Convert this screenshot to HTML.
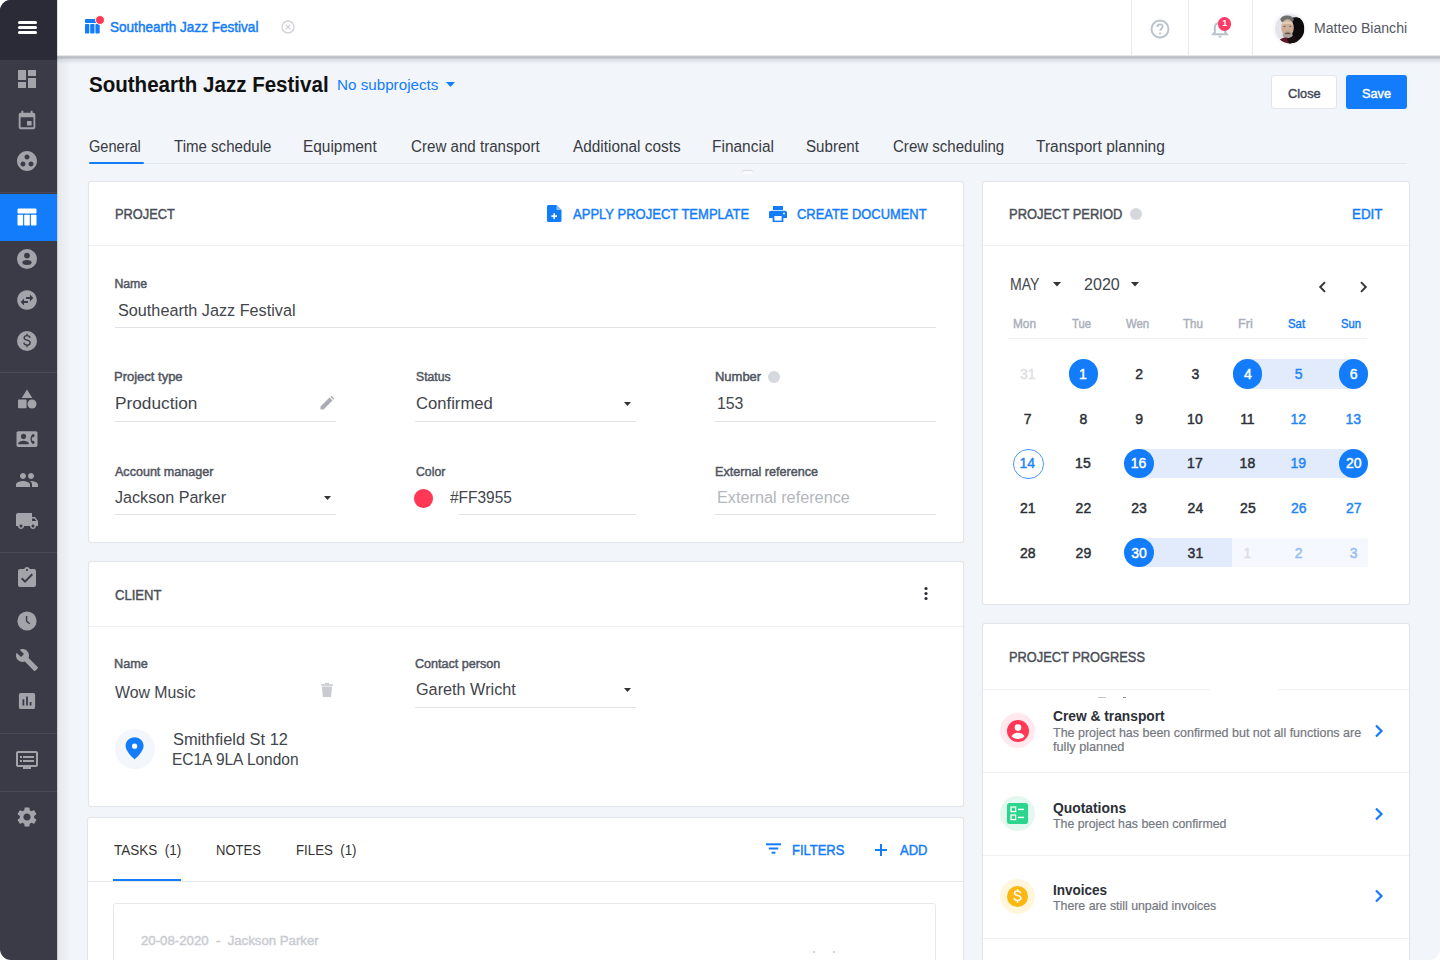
<!DOCTYPE html>
<html><head><meta charset="utf-8">
<style>
*{margin:0;padding:0;box-sizing:border-box}
html,body{width:1440px;height:960px;overflow:hidden;background:#fff}
body{font-family:"Liberation Sans",sans-serif;position:relative}
#app{position:absolute;left:0;top:0;width:1440px;height:960px;border-radius:11px;overflow:hidden;background:#f2f5fa}
.t{position:absolute;white-space:pre;line-height:1;transform-origin:0 0}
.a{position:absolute}
.card{position:absolute;background:#fff;border:1px solid #e4e5e8;border-radius:3px;box-shadow:0 0 1.5px rgba(0,0,0,0.06)}
.hl{position:absolute;height:1px;background:#eef0f3}
.ul{position:absolute;height:1px;background:#dfe2e6}
svg{position:absolute;overflow:visible}
</style></head><body>
<div id="app">
<!-- main area shadow from sidebar -->
<div class="a" style="left:57px;top:56px;width:14px;height:904px;background:linear-gradient(90deg,rgba(0,0,0,0.06),rgba(0,0,0,0))"></div>

<!-- header -->
<div class="a" style="left:57px;top:0;width:1383px;height:56px;background:#fff"></div>
<div class="a" style="left:57px;top:55px;width:1383px;height:9px;background:linear-gradient(180deg,rgba(150,156,162,0.05) 0px,rgba(140,146,152,0.45) 1.2px,rgba(140,146,152,0.55) 2.5px,rgba(160,166,176,0.3) 4.5px,rgba(200,205,215,0) 9px)"></div>
<div class="a" style="left:1131px;top:0;width:1px;height:56px;background:#e8eaed"></div>
<div class="a" style="left:1188px;top:0;width:1px;height:56px;background:#e8eaed"></div>
<div class="a" style="left:1252px;top:0;width:1px;height:56px;background:#e8eaed"></div>

<!-- logo -->
<svg style="left:85px;top:19px" width="16" height="15" viewBox="0 0 16 15">
 <rect x="0" y="0" width="13" height="4" rx="1" fill="#127cfa"/>
 <rect x="0" y="5" width="4.3" height="9.5" rx="0.8" fill="#127cfa"/>
 <rect x="5.2" y="5" width="4.3" height="9.5" rx="0.8" fill="#127cfa"/>
 <rect x="10.4" y="5" width="4.3" height="9.5" rx="0.8" fill="#127cfa"/>
</svg>
<div class="a" style="left:95px;top:15px;width:10px;height:10px;border-radius:50%;background:#ff3955;border:1px solid #fff"></div>
<!-- close circle -->
<svg style="left:281px;top:20px" width="14" height="14" viewBox="0 0 14 14">
 <circle cx="7" cy="7" r="6" fill="none" stroke="#cfd2d6" stroke-width="1.3"/>
 <path d="M4.6 4.6L9.4 9.4M9.4 4.6L4.6 9.4" stroke="#cfd2d6" stroke-width="1.3"/>
</svg>
<!-- help -->
<svg style="left:1150px;top:18.6px" width="20" height="20" viewBox="0 0 20 20">
 <circle cx="10" cy="10" r="8.5" fill="none" stroke="#bac2cc" stroke-width="1.9"/>
 <path d="M7.4 8c0-1.6 1.1-2.6 2.6-2.6s2.6 1 2.6 2.4c0 1.8-2.4 2-2.4 3.9" fill="none" stroke="#bac2cc" stroke-width="1.9"/>
 <circle cx="10.1" cy="14.5" r="1.1" fill="#bac2cc"/>
</svg>
<!-- bell -->
<svg style="left:1211px;top:19px" width="18" height="20" viewBox="0 0 18 20">
 <path d="M2.2 15.3h13.6l-1.6-1.8V9.2c0-2.7-1.7-4.9-4.2-5.4V3.2a1 1 0 0 0-2 0v.6C5.5 4.3 3.8 6.5 3.8 9.2v4.3z" fill="none" stroke="#bac2cc" stroke-width="2"/>
 <path d="M7.6 17.6h2.8" stroke="#bac2cc" stroke-width="1.8"/>
</svg>
<div class="a" style="left:1218px;top:17.3px;width:13.4px;height:13.4px;border-radius:50%;background:#ff3a64;color:#fff;font-size:9px;font-weight:700;line-height:13.4px;text-align:center">1</div>
<!-- avatar -->
<div class="a" style="left:1273.5px;top:13px;width:31px;height:31px;border-radius:50%;box-shadow:0 0 2px rgba(0,0,0,0.12)"></div>
<svg style="left:1274.8px;top:14px" width="29.4" height="29.4" viewBox="0 0 30 30">
 <defs><clipPath id="avc"><circle cx="15" cy="15" r="15"/></clipPath></defs>
 <g clip-path="url(#avc)">
  <rect x="0" y="0" width="30" height="30" fill="#e3e5ea"/>
  <path d="M17 4 C21 2 30 4 30 10 L30 30 L14 30 Z" fill="#0d0b0c"/>
  <ellipse cx="12.3" cy="5.6" rx="6.8" ry="4" fill="#6f6f70"/>
  <ellipse cx="12.8" cy="14.2" rx="6.4" ry="9" fill="#cfae95"/>
  <path d="M7.5 8.5 Q12.5 6 18 8.8 L18 11 Q12.5 9 7.5 11Z" fill="#e2cbb7"/>
  <ellipse cx="9.6" cy="12.8" rx="1.2" ry="0.7" fill="#6b6a72"/>
  <ellipse cx="15.6" cy="12.6" rx="1.2" ry="0.7" fill="#6b6a72"/>
  <ellipse cx="13" cy="21.8" rx="5" ry="4.2" fill="#a9a39e"/>
  <path d="M10.2 19.4 Q13 18.3 15.8 19.4 L15.2 20.6 Q13 20 10.8 20.6Z" fill="#6d4a3f"/>
  <path d="M2 31 Q4 24.5 11 24 L16 25 L24 31Z" fill="#5a1a2a"/>
  <path d="M12 25.5 Q16 24 20 22 L26 31 L15 31Z" fill="#1a0d10"/>
 </g>
</svg>
<!-- sidebar -->
<div class="a" style="left:0;top:0;width:57px;height:960px;background:#3b3b48"></div>
<div class="a" style="left:0;top:0;width:57px;height:60px;background:#2b2b37"></div>
<div class="a" style="left:57px;top:0;width:1px;height:960px;background:rgba(0,0,0,0.12)"></div>
<div class="a" style="left:18px;top:21px;width:19px;height:3px;border-radius:1.5px;background:#fff"></div>
<div class="a" style="left:18px;top:26px;width:19px;height:3px;border-radius:1.5px;background:#fff"></div>
<div class="a" style="left:18px;top:31px;width:19px;height:3px;border-radius:1.5px;background:#fff"></div>
<div class="a" style="left:0;top:192px;width:57px;height:1px;background:#4a4a57"></div>
<div class="a" style="left:0;top:193.6px;width:57px;height:47.2px;background:#127cfa"></div>
<div class="a" style="left:0;top:372px;width:57px;height:1px;background:#4a4a57"></div>
<div class="a" style="left:0;top:552px;width:57px;height:1px;background:#4a4a57"></div>
<div class="a" style="left:0;top:733px;width:57px;height:1px;background:#4a4a57"></div>
<div class="a" style="left:0;top:791px;width:57px;height:1px;background:#4a4a57"></div>
<svg style="left:15px;top:67.2px" width="24" height="24" viewBox="0 0 24 24"><path fill="#a3a3aa" d="M3 13h8V3H3v10zm0 8h8v-6H3v6zm10 0h8V11h-8v10zm0-18v6h8V3h-8z"/></svg>
<svg style="left:15px;top:108.6px" width="24" height="24" viewBox="0 0 24 24"><path transform="translate(12 11) scale(0.92) translate(-12 -11)" fill="#a3a3aa" d="M17 12h-5v5h5v-5zM16 1v2H8V1H6v2H5c-1.11 0-1.99.9-1.99 2L3 19c0 1.1.89 2 2 2h14c1.1 0 2-.9 2-2V5c0-1.1-.9-2-2-2h-1V1h-2zm3 18H5V8h14v11z"/></svg>
<svg style="left:15px;top:149.0px" width="24" height="24" viewBox="0 0 24 24"><path fill="#a3a3aa" d="M12 2C6.48 2 2 6.48 2 12s4.48 10 10 10 10-4.48 10-10S17.52 2 12 2zM8 17.5c-1.38 0-2.5-1.12-2.5-2.5s1.12-2.5 2.5-2.5 2.5 1.12 2.5 2.5-1.12 2.5-2.5 2.5zM9.5 8c0-1.38 1.12-2.5 2.5-2.5s2.5 1.12 2.5 2.5-1.12 2.5-2.5 2.5S9.5 9.38 9.5 8zm6.5 9.5c-1.38 0-2.5-1.12-2.5-2.5s1.12-2.5 2.5-2.5 2.5 1.12 2.5 2.5-1.12 2.5-2.5 2.5z"/></svg>
<svg style="left:15px;top:204.5px" width="24" height="24" viewBox="0 0 24 24"><rect x="2.5" y="3.5" width="19" height="5" rx="1.2" fill="#fff"/><rect x="2.5" y="9.8" width="5.6" height="10.7" rx="0.8" fill="#fff"/><rect x="9.2" y="9.8" width="5.6" height="10.7" rx="0.8" fill="#fff"/><rect x="15.9" y="9.8" width="5.6" height="10.7" rx="0.8" fill="#fff"/></svg>
<svg style="left:15px;top:247.3px" width="24" height="24" viewBox="0 0 24 24"><circle cx="12" cy="12" r="10" fill="#a3a3aa"/><circle cx="12" cy="8.6" r="2.9" fill="#3b3b48"/><ellipse cx="12" cy="15.4" rx="4.6" ry="2.5" fill="#3b3b48"/></svg>
<svg style="left:15px;top:288.0px" width="24" height="24" viewBox="0 0 24 24"><path fill="#a3a3aa" d="M22 12c0-5.52-4.48-10-10-10S2 6.48 2 12s4.48 10 10 10 10-4.48 10-10zm-7-5.5l3.5 3.5-3.5 3.5V11h-4V9h4V6.5zm-6 11L5.5 14 9 10.5V13h4v2H9v2.5z" transform="translate(12 12) scale(0.98) translate(-12 -12)"/></svg>
<svg style="left:15px;top:329.0px" width="24" height="24" viewBox="0 0 24 24"><circle cx="12" cy="12" r="10" fill="#a3a3aa"/><path d="M15 8.8c-.2-1.3-1.3-2.2-3-2.2-1.7 0-2.9.9-2.9 2.2 0 3 6.1 1.6 6.1 4.9 0 1.4-1.3 2.4-3.2 2.4-1.8 0-3-.9-3.2-2.4M12 4.8v1.9M12 16.2v2.1" fill="none" stroke="#3b3b48" stroke-width="1.4"/></svg>
<svg style="left:15px;top:386.7px" width="24" height="24" viewBox="0 0 24 24"><path fill="#a3a3aa" d="M12 2.5l-5.3 8.6h10.6z"/><circle cx="17" cy="17" r="4.5" fill="#a3a3aa"/><rect x="3" y="12.6" width="8.6" height="8.6" rx="0.8" fill="#a3a3aa"/></svg>
<svg style="left:15px;top:427.0px" width="24" height="24" viewBox="0 0 24 24"><path fill="#a3a3aa" d="M22 3H2C.9 3 0 3.9 0 5v14c0 1.1.9 2 2 2h20c1.1 0 1.99-.9 1.99-2L24 5c0-1.1-.9-2-2-2zM8 6c1.66 0 3 1.34 3 3s-1.34 3-3 3-3-1.34-3-3 1.34-3 3-3zm6 12H2v-1c0-2 4-3.1 6-3.1s6 1.1 6 3.1v1zm3.85-4h1.64L21 16l-1.99 1.99c-1.31-.98-2.28-2.38-2.73-3.99-.18-.64-.28-1.31-.28-2s.1-1.36.28-2c.45-1.62 1.42-3.01 2.73-3.99L21 8l-1.51 2h-1.64c-.22.63-.35 1.3-.35 2s.13 1.37.35 2z" transform="translate(1.5 1.5) scale(0.875)"/></svg>
<svg style="left:15px;top:468.0px" width="24" height="24" viewBox="0 0 24 24"><path fill="#a3a3aa" d="M16 11c1.66 0 2.99-1.34 2.99-3S17.66 5 16 5c-1.66 0-3 1.34-3 3s1.34 3 3 3zm-8 0c1.66 0 2.99-1.34 2.99-3S9.66 5 8 5C6.34 5 5 6.34 5 8s1.34 3 3 3zm0 2c-2.33 0-7 1.17-7 3.5V19h14v-2.5c0-2.33-4.67-3.5-7-3.5zm8 0c-.29 0-.62.02-.97.05 1.16.84 1.97 1.97 1.97 3.45V19h6v-2.5c0-2.33-4.67-3.5-7-3.5z"/></svg>
<svg style="left:15px;top:508.5px" width="24" height="24" viewBox="0 0 24 24"><path fill="#a3a3aa" d="M20 8h-3V4H3c-1.1 0-2 .9-2 2v11h2c0 1.66 1.34 3 3 3s3-1.34 3-3h6c0 1.66 1.34 3 3 3s3-1.34 3-3h2v-5l-3-4zM6 18.5c-.83 0-1.5-.67-1.5-1.5s.67-1.5 1.5-1.5 1.5.67 1.5 1.5-.67 1.5-1.5 1.5zm13.5-9l1.96 2.5H17V9.5h2.5zm-1.5 9c-.83 0-1.5-.67-1.5-1.5s.67-1.5 1.5-1.5 1.5.67 1.5 1.5-.67 1.5-1.5 1.5z"/></svg>
<svg style="left:15px;top:566.0px" width="24" height="24" viewBox="0 0 24 24"><path fill="#a3a3aa" d="M19 3h-4.18C14.4 1.84 13.3 1 12 1c-1.3 0-2.4.84-2.82 2H5c-1.1 0-2 .9-2 2v14c0 1.1.9 2 2 2h14c1.1 0 2-.9 2-2V5c0-1.1-.9-2-2-2zm-7 0c.55 0 1 .45 1 1s-.45 1-1 1-1-.45-1-1 .45-1 1-1zm-2 14l-4-4 1.41-1.41L10 14.17l6.59-6.59L18 9l-8 8z"/></svg>
<svg style="left:15px;top:608.7px" width="24" height="24" viewBox="0 0 24 24"><circle cx="12" cy="12" r="9.6" fill="#a3a3aa"/><path d="M11.6 7v5.2l3.2 2.6" fill="none" stroke="#3b3b48" stroke-width="1.4"/></svg>
<svg style="left:15px;top:648.4px" width="24" height="24" viewBox="0 0 24 24"><path fill="#a3a3aa" d="M22.7 19l-9.1-9.1c.9-2.3.4-5-1.5-6.9-2-2-5-2.4-7.4-1.3L9 6 6 9 1.6 4.7C.4 7.1.9 10.1 2.9 12.1c1.9 1.9 4.6 2.4 6.9 1.5l9.1 9.1c.4.4 1 .4 1.4 0l2.3-2.3c.5-.4.5-1.1.1-1.4z"/></svg>
<svg style="left:15px;top:689.3px" width="24" height="24" viewBox="0 0 24 24"><path fill="#a3a3aa" d="M19 3H5c-1.1 0-2 .9-2 2v14c0 1.1.9 2 2 2h14c1.1 0 2-.9 2-2V5c0-1.1-.9-2-2-2zM9 17H7v-7h2v7zm4 0h-2V7h2v10zm4 0h-2v-4h2v4z" transform="translate(1.2 1.2) scale(0.9)"/></svg>
<svg style="left:15px;top:747.7px" width="24" height="24" viewBox="0 0 24 24"><path fill="#a3a3aa" d="M21 3H3c-1.1 0-2 .9-2 2v12c0 1.1.9 2 2 2h5v2h8v-2h5c1.1 0 1.99-.9 1.99-2L23 5c0-1.1-.9-2-2-2zm0 14H3V5h18v12zm-2-9H8v2h11V8zm0 4H8v2h11v-2zM7 8H5v2h2V8zm0 4H5v2h2v-2z"/></svg>
<svg style="left:15px;top:805.4px" width="24" height="24" viewBox="0 0 24 24"><path fill="#a3a3aa" d="M19.14 12.94c.04-.3.06-.61.06-.94 0-.32-.02-.64-.07-.94l2.03-1.58c.18-.14.23-.41.12-.61l-1.92-3.32c-.12-.22-.37-.29-.59-.22l-2.39.96c-.5-.38-1.03-.7-1.62-.94l-.36-2.54c-.04-.24-.24-.41-.48-.41h-3.84c-.24 0-.43.17-.47.41l-.36 2.54c-.59.24-1.13.57-1.62.94l-2.39-.96c-.22-.08-.47 0-.59.22L2.74 8.87c-.12.21-.08.47.12.61l2.03 1.58c-.05.3-.09.63-.09.94s.02.64.07.94l-2.03 1.58c-.18.14-.23.41-.12.61l1.92 3.32c.12.22.37.29.59.22l2.39-.96c.5.38 1.03.7 1.62.94l.36 2.54c.05.24.24.41.48.41h3.84c.24 0 .44-.17.47-.41l.36-2.54c.59-.24 1.13-.56 1.62-.94l2.39.96c.22.08.47 0 .59-.22l1.92-3.32c.12-.22.07-.47-.12-.61l-2.01-1.58zM12 15.6c-1.98 0-3.6-1.62-3.6-3.6s1.62-3.6 3.6-3.6 3.6 1.62 3.6 3.6-1.62 3.6-3.6 3.6z"/></svg>

<!-- title buttons -->
<div class="a" style="left:1271px;top:75px;width:66px;height:34px;background:#fff;border:1px solid #e2e5e9;border-radius:3px"></div>
<div class="a" style="left:1346px;top:75px;width:61px;height:34px;background:#127cfa;border-radius:3px"></div>
<svg style="left:446px;top:82px" width="9" height="5" viewBox="0 0 9 5"><path d="M0 0h9L4.5 5z" fill="#127cfa"/></svg>

<!-- tabs line -->
<div class="a" style="left:89px;top:163px;width:1318px;height:1px;background:#e4e7eb"></div>
<div class="a" style="left:89px;top:162px;width:55px;height:2px;border-radius:1px;background:#127cfa"></div>

<!-- cards -->
<div class="card" style="left:88px;top:181px;width:876px;height:362px"></div>
<div class="card" style="left:88px;top:560.5px;width:876px;height:246px"></div>
<div class="card" style="left:87px;top:817px;width:877px;height:160px"></div>
<div class="card" style="left:982px;top:181px;width:428px;height:424px"></div>
<div class="card" style="left:982px;top:623px;width:428px;height:360px"></div>

<div class="hl" style="left:89px;top:245px;width:874px"></div>
<div class="hl" style="left:89px;top:626px;width:874px"></div>
<div class="hl" style="left:88px;top:881px;width:875px;background:#e6e8eb"></div>
<div class="a" style="left:113px;top:879px;width:68px;height:2px;background:#127cfa"></div>
<div class="hl" style="left:983px;top:245px;width:426px"></div>
<div class="hl" style="left:983px;top:689px;width:426px"></div>
<div class="hl" style="left:983px;top:772px;width:426px"></div>
<div class="hl" style="left:983px;top:855px;width:426px"></div>
<div class="hl" style="left:983px;top:938px;width:426px"></div>

<!-- project card icons -->
<svg style="left:547px;top:205px" width="15" height="17" viewBox="0 0 15 17">
 <path d="M1.5 0h8l5 5v10.5a1.5 1.5 0 0 1-1.5 1.5h-11.5a1.5 1.5 0 0 1-1.5-1.5v-14a1.5 1.5 0 0 1 1.5-1.5z" fill="#127cfa"/>
 <path d="M9.5 0v5h5" fill="#8cbdfb"/>
 <path d="M7.2 8.3v5.6M4.4 11.1h5.6" stroke="#fff" stroke-width="1.6"/>
</svg>
<svg style="left:769px;top:206px" width="18" height="16" viewBox="0 0 18 16">
 <rect x="4" y="0" width="10" height="4" fill="#127cfa"/>
 <path d="M2 4.8h14a2 2 0 0 1 2 2v5.2h-3.6v4h-10.8v-4h-3.6v-5.2a2 2 0 0 1 2-2z" fill="#127cfa"/>
 <rect x="5.4" y="10" width="7.2" height="4.6" fill="#fff"/>
 <circle cx="15" cy="7.5" r="0.9" fill="#fff"/>
</svg>
<!-- underlines -->
<div class="ul" style="left:115px;top:327px;width:821px"></div>
<div class="ul" style="left:115px;top:421px;width:221px"></div>
<div class="ul" style="left:415px;top:421px;width:221px"></div>
<div class="ul" style="left:715px;top:421px;width:221px"></div>
<div class="ul" style="left:115px;top:514px;width:221px"></div>
<div class="ul" style="left:459px;top:514px;width:177px"></div>
<div class="ul" style="left:715px;top:514px;width:221px"></div>
<div class="ul" style="left:415px;top:707px;width:221px"></div>
<!-- pencil -->
<svg style="left:319px;top:396px" width="16" height="15" viewBox="0 0 16 15">
 <path d="M1.5 13.5v-3L10.5 1.5l3 3L4.5 13.5z" fill="#a9adb3"/>
 <path d="M11.3 0.7l1-1 3 3-1 1z" fill="#a9adb3"/>
</svg>
<!-- carets -->
<svg style="left:624px;top:401.5px" width="7" height="4" viewBox="0 0 7 4"><path d="M0 0h7L3.5 4z" fill="#333"/></svg>
<svg style="left:324px;top:495.5px" width="7" height="4" viewBox="0 0 7 4"><path d="M0 0h7L3.5 4z" fill="#333"/></svg>
<svg style="left:624px;top:687.5px" width="7" height="4" viewBox="0 0 7 4"><path d="M0 0h7L3.5 4z" fill="#333"/></svg>
<!-- info dot number -->
<div class="a" style="left:767.5px;top:370.5px;width:12.5px;height:12.5px;border-radius:50%;background:#d5d8dd"></div>
<!-- color dot -->
<div class="a" style="left:414px;top:489px;width:18.5px;height:18.5px;border-radius:50%;background:#ff3955"></div>

<!-- client card -->
<svg style="left:921px;top:586px" width="10" height="16" viewBox="0 0 10 16">
 <circle cx="5" cy="2.5" r="1.6" fill="#2c2f36"/><circle cx="5" cy="7.5" r="1.6" fill="#2c2f36"/><circle cx="5" cy="12.5" r="1.6" fill="#2c2f36"/>
</svg>
<svg style="left:321px;top:683px" width="12" height="14" viewBox="0 0 12 14">
 <path d="M1 3.5h10l-0.8 10a1 1 0 0 1-1 0.5h-6.4a1 1 0 0 1-1-0.5z" fill="#c9cbcf"/>
 <rect x="0" y="1.2" width="12" height="1.6" fill="#c9cbcf"/><rect x="4" y="0" width="4" height="1.5" fill="#c9cbcf"/>
</svg>
<div class="a" style="left:115px;top:729px;width:40px;height:40px;border-radius:50%;background:#f3f6fb"></div>
<svg style="left:125px;top:737px" width="20" height="23" viewBox="0 0 20 23">
 <path d="M9.6 0.3C4.5 0.3 0.6 4.2 0.6 9.1c0 5.8 9 13.4 9 13.4s9-7.6 9-13.4c0-4.9-3.9-8.8-9-8.8z" fill="#127cfa"/>
 <circle cx="9.6" cy="9.2" r="2.6" fill="#fff"/>
</svg>

<!-- tasks card -->
<div class="a" style="left:113px;top:903px;width:823px;height:80px;border:1px solid #e6e8eb;border-radius:3px;background:#fff"></div>
<svg style="left:766px;top:843px" width="15" height="11" viewBox="0 0 15 11">
 <rect x="0" y="0.3" width="15" height="2" fill="#127cfa"/><rect x="2.8" y="4.5" width="9.4" height="2" fill="#127cfa"/><rect x="5.6" y="8.7" width="3.8" height="2" fill="#127cfa"/>
</svg>
<svg style="left:875px;top:843.5px" width="12" height="12" viewBox="0 0 12 12">
 <path d="M6 0v12M0 6h12" stroke="#127cfa" stroke-width="2"/>
</svg>

<!-- project period -->
<div class="a" style="left:1129.5px;top:207.5px;width:12.5px;height:12.5px;border-radius:50%;background:#d5d8dd"></div>
<svg style="left:1053px;top:282px" width="8" height="4.5" viewBox="0 0 8 4.5"><path d="M0 0h8L4 4.5z" fill="#333"/></svg>
<svg style="left:1131px;top:282px" width="8" height="4.5" viewBox="0 0 8 4.5"><path d="M0 0h8L4 4.5z" fill="#333"/></svg>
<svg style="left:1318px;top:281px" width="9" height="12" viewBox="0 0 9 12"><path d="M7 1.2L2.2 6 7 10.8" fill="none" stroke="#333" stroke-width="1.9"/></svg>
<svg style="left:1359px;top:281px" width="9" height="12" viewBox="0 0 9 12"><path d="M2 1.2L6.8 6 2 10.8" fill="none" stroke="#333" stroke-width="1.9"/></svg>
<div class="a" style="left:1008px;top:338px;width:359px;height:1px;background:#eef0f3"></div>
<!-- ranges -->
<div class="a" style="left:1247.6px;top:359.3px;width:106px;height:29.6px;background:#e1ebfb"></div>
<div class="a" style="left:1138.8px;top:448.5px;width:215px;height:29.6px;background:#e1ebfb"></div>
<div class="a" style="left:1138.8px;top:537.8px;width:93.5px;height:29.6px;background:#e1ebfb"></div>
<div class="a" style="left:1232.3px;top:537.8px;width:136px;height:29.6px;background:#f5f8fe"></div>
<!-- circles -->
<div class="a" style="left:1068.5px;top:359.3px;width:29.6px;height:29.6px;border-radius:50%;background:#127cfa"></div>
<div class="a" style="left:1232.8px;top:359.3px;width:29.6px;height:29.6px;border-radius:50%;background:#127cfa"></div>
<div class="a" style="left:1338.9px;top:359.3px;width:29.6px;height:29.6px;border-radius:50%;background:#127cfa"></div>
<div class="a" style="left:1124px;top:448.5px;width:29.6px;height:29.6px;border-radius:50%;background:#127cfa"></div>
<div class="a" style="left:1338.9px;top:448.5px;width:29.6px;height:29.6px;border-radius:50%;background:#127cfa"></div>
<div class="a" style="left:1124px;top:537.8px;width:29.6px;height:29.6px;border-radius:50%;background:#127cfa"></div>
<div class="a" style="left:1013px;top:448.5px;width:30.6px;height:30.6px;border-radius:50%;border:1px solid #4b97f9;background:#fff"></div>

<!-- progress icons -->
<div class="a" style="left:1000px;top:713px;width:35px;height:35px;border-radius:50%;background:#ffe9ee"></div>
<svg style="left:1005.5px;top:719px" width="24" height="24" viewBox="0 0 24 24">
 <circle cx="12" cy="12" r="11" fill="#ff3955"/>
 <circle cx="12" cy="8.6" r="3.3" fill="#fff"/>
 <path d="M5.5 17.2c1.4-2.3 3.8-3.4 6.5-3.4s5.1 1.1 6.5 3.4c-1.6 1.8-3.9 2.8-6.5 2.8s-4.9-1-6.5-2.8z" fill="#fff"/>
</svg>
<div class="a" style="left:1000px;top:796px;width:35px;height:35px;border-radius:50%;background:#e3f8ef"></div>
<svg style="left:1007px;top:803px" width="21" height="21" viewBox="0 0 21 21">
 <rect x="0" y="0" width="21" height="21" rx="2.5" fill="#2bd68c"/>
 <rect x="4" y="4" width="4.6" height="4.6" fill="none" stroke="#fff" stroke-width="1.3"/>
 <rect x="4" y="12" width="4.6" height="4.6" fill="none" stroke="#fff" stroke-width="1.3"/>
 <rect x="11" y="5.7" width="6" height="1.4" fill="#fff"/>
 <rect x="11" y="13.7" width="6" height="1.4" fill="#fff"/>
</svg>
<div class="a" style="left:1000px;top:879px;width:35px;height:35px;border-radius:50%;background:#fff6dc"></div>
<svg style="left:1006px;top:885px" width="23" height="23" viewBox="0 0 24 24">
 <circle cx="12" cy="12" r="11" fill="#fbb712"/>
 <path d="M15.2 8.6c-.3-1.4-1.5-2.3-3.2-2.3-1.8 0-3.1.9-3.1 2.3 0 3.1 6.6 1.6 6.6 5 0 1.5-1.4 2.5-3.5 2.5-1.9 0-3.2-1-3.5-2.5M12 4.5v2M12 16.2v2.2" fill="none" stroke="#fff" stroke-width="1.6"/>
</svg>
<svg style="left:1374px;top:724px" width="10" height="14" viewBox="0 0 10 14"><path d="M2 1.5L7.5 7 2 12.5" fill="none" stroke="#127cfa" stroke-width="2.2"/></svg>
<svg style="left:1374px;top:807px" width="10" height="14" viewBox="0 0 10 14"><path d="M2 1.5L7.5 7 2 12.5" fill="none" stroke="#127cfa" stroke-width="2.2"/></svg>
<svg style="left:1374px;top:889px" width="10" height="14" viewBox="0 0 10 14"><path d="M2 1.5L7.5 7 2 12.5" fill="none" stroke="#127cfa" stroke-width="2.2"/></svg>

<!-- artifacts -->
<div class="a" style="left:1210px;top:688px;width:68px;height:3px;background:#fff"></div>
<div class="a" style="left:1098px;top:697px;width:8px;height:1px;background:rgba(80,85,95,0.35)"></div>
<div class="a" style="left:1123px;top:696.5px;width:3px;height:1.2px;background:rgba(60,70,110,0.6)"></div>
<div class="a" style="left:742px;top:171px;width:11px;height:3px;border-radius:6px 6px 0 0;box-shadow:0 -1px 1.2px rgba(0,0,0,0.13);background:#fafbfe"></div>
<div class="a" style="left:813px;top:951px;width:1.5px;height:1.5px;background:#d0d3da"></div>
<div class="a" style="left:833px;top:951px;width:1.5px;height:1.5px;background:#d0d3da"></div>
<div class="t" style="left:109.70px;top:20.00px;font-size:14px;font-weight:400;-webkit-text-stroke:0.45px #127cfa;color:#127cfa;transform:scaleX(0.9681);">Southearth Jazz Festival</div>
<div class="t" style="left:1314.19px;top:21.00px;font-size:14px;font-weight:400;color:#545864;transform:scaleX(1.0055);">Matteo Bianchi</div>
<div class="t" style="left:89.30px;top:75.00px;font-size:21.4px;font-weight:700;color:#111;transform:scaleX(0.9599);">Southearth Jazz Festival</div>
<div class="t" style="left:336.77px;top:78.00px;font-size:14.7px;font-weight:400;color:#127cfa;transform:scaleX(1.0350);">No subprojects</div>
<div class="t" style="left:1287.80px;top:87.00px;font-size:13.5px;font-weight:400;-webkit-text-stroke:0.45px #444a55;color:#444a55;transform:scaleX(0.9469);">Close</div>
<div class="t" style="left:1362.00px;top:87.00px;font-size:13.5px;font-weight:400;-webkit-text-stroke:0.45px #fff;color:#fff;transform:scaleX(0.9418);">Save</div>
<div class="t" style="left:89.40px;top:139.00px;font-size:15.6px;font-weight:400;color:#383b42;transform:scaleX(0.9343);">General</div>
<div class="t" style="left:174.30px;top:139.00px;font-size:15.6px;font-weight:400;color:#383b42;transform:scaleX(0.9655);">Time schedule</div>
<div class="t" style="left:303.31px;top:139.00px;font-size:15.6px;font-weight:400;color:#383b42;transform:scaleX(0.9890);">Equipment</div>
<div class="t" style="left:410.70px;top:139.00px;font-size:15.6px;font-weight:400;color:#383b42;transform:scaleX(0.9702);">Crew and transport</div>
<div class="t" style="left:572.50px;top:139.00px;font-size:15.6px;font-weight:400;color:#383b42;transform:scaleX(0.9852);">Additional costs</div>
<div class="t" style="left:711.81px;top:139.00px;font-size:15.6px;font-weight:400;color:#383b42;transform:scaleX(0.9928);">Financial</div>
<div class="t" style="left:806.40px;top:139.00px;font-size:15.6px;font-weight:400;color:#383b42;transform:scaleX(0.9695);">Subrent</div>
<div class="t" style="left:892.70px;top:139.00px;font-size:15.6px;font-weight:400;color:#383b42;transform:scaleX(0.9650);">Crew scheduling</div>
<div class="t" style="left:1036.00px;top:139.00px;font-size:15.6px;font-weight:400;color:#383b42;transform:scaleX(0.9955);">Transport planning</div>
<div class="t" style="left:114.51px;top:207.00px;font-size:14.4px;font-weight:400;-webkit-text-stroke:0.45px #4a4e57;color:#4a4e57;transform:scaleX(0.8920);">PROJECT</div>
<div class="t" style="left:573.30px;top:207.00px;font-size:14.4px;font-weight:400;-webkit-text-stroke:0.45px #127cfa;color:#127cfa;transform:scaleX(0.9056);">APPLY PROJECT TEMPLATE</div>
<div class="t" style="left:797.00px;top:207.00px;font-size:14.4px;font-weight:400;-webkit-text-stroke:0.45px #127cfa;color:#127cfa;transform:scaleX(0.8967);">CREATE DOCUMENT</div>
<div class="t" style="left:114.40px;top:278.00px;font-size:12.3px;font-weight:400;-webkit-text-stroke:0.45px #505561;color:#505561;">Name</div>
<div class="t" style="left:117.80px;top:302.00px;font-size:17.2px;font-weight:400;color:#42454c;transform:scaleX(0.9435);">Southearth Jazz Festival</div>
<div class="t" style="left:114.24px;top:371.00px;font-size:12.3px;font-weight:400;-webkit-text-stroke:0.45px #505561;color:#505561;transform:scaleX(1.0563);">Project type</div>
<div class="t" style="left:415.80px;top:371.00px;font-size:12.3px;font-weight:400;-webkit-text-stroke:0.45px #505561;color:#505561;transform:scaleX(0.9939);">Status</div>
<div class="t" style="left:714.74px;top:371.00px;font-size:12.3px;font-weight:400;-webkit-text-stroke:0.45px #505561;color:#505561;transform:scaleX(1.0553);">Number</div>
<div class="t" style="left:114.80px;top:395.00px;font-size:17.2px;font-weight:400;color:#42454c;transform:scaleX(1.0036);">Production</div>
<div class="t" style="left:415.80px;top:395.00px;font-size:17.2px;font-weight:400;color:#42454c;transform:scaleX(0.9679);">Confirmed</div>
<div class="t" style="left:717.38px;top:395.00px;font-size:17.2px;font-weight:400;color:#42454c;transform:scaleX(0.9219);">153</div>
<div class="t" style="left:115.00px;top:466.00px;font-size:12.3px;font-weight:400;-webkit-text-stroke:0.45px #505561;color:#505561;transform:scaleX(1.0209);">Account manager</div>
<div class="t" style="left:415.80px;top:466.00px;font-size:12.3px;font-weight:400;-webkit-text-stroke:0.45px #505561;color:#505561;transform:scaleX(0.9969);">Color</div>
<div class="t" style="left:714.77px;top:466.00px;font-size:12.3px;font-weight:400;-webkit-text-stroke:0.45px #505561;color:#505561;transform:scaleX(1.0257);">External reference</div>
<div class="t" style="left:115.30px;top:489.00px;font-size:17.2px;font-weight:400;color:#42454c;transform:scaleX(0.9383);">Jackson Parker</div>
<div class="t" style="left:450.30px;top:489.00px;font-size:17.2px;font-weight:400;color:#42454c;transform:scaleX(0.8999);">#FF3955</div>
<div class="t" style="left:717.35px;top:489.00px;font-size:17.2px;font-weight:400;color:#b4b7bd;transform:scaleX(0.9462);">External reference</div>
<div class="t" style="left:115.00px;top:588.00px;font-size:14.4px;font-weight:400;-webkit-text-stroke:0.45px #4a4e57;color:#4a4e57;transform:scaleX(0.9088);">CLIENT</div>
<div class="t" style="left:113.97px;top:658.00px;font-size:12.3px;font-weight:400;-webkit-text-stroke:0.45px #505561;color:#505561;transform:scaleX(1.0325);">Name</div>
<div class="t" style="left:415.30px;top:658.00px;font-size:12.3px;font-weight:400;-webkit-text-stroke:0.45px #505561;color:#505561;transform:scaleX(1.0233);">Contact person</div>
<div class="t" style="left:115.30px;top:684.00px;font-size:17.2px;font-weight:400;color:#42454c;transform:scaleX(0.9210);">Wow Music</div>
<div class="t" style="left:415.80px;top:681.00px;font-size:17.2px;font-weight:400;color:#42454c;transform:scaleX(0.9441);">Gareth Wricht</div>
<div class="t" style="left:173.00px;top:732.00px;font-size:16px;font-weight:400;color:#42454c;transform:scaleX(1.0254);">Smithfield St 12</div>
<div class="t" style="left:172.33px;top:752.00px;font-size:16px;font-weight:400;color:#42454c;transform:scaleX(0.9675);">EC1A 9LA London</div>
<div class="t" style="left:113.50px;top:843.00px;font-size:14px;font-weight:400;color:#333;transform:scaleX(0.9654);">TASKS  (1)</div>
<div class="t" style="left:215.77px;top:843.00px;font-size:14px;font-weight:400;color:#333;transform:scaleX(0.9320);">NOTES</div>
<div class="t" style="left:295.95px;top:843.00px;font-size:14px;font-weight:400;color:#333;transform:scaleX(0.9480);">FILES  (1)</div>
<div class="t" style="left:791.90px;top:843.00px;font-size:14.4px;font-weight:400;-webkit-text-stroke:0.45px #127cfa;color:#127cfa;transform:scaleX(0.9017);">FILTERS</div>
<div class="t" style="left:900.00px;top:843.00px;font-size:14.4px;font-weight:400;-webkit-text-stroke:0.45px #127cfa;color:#127cfa;transform:scaleX(0.9003);">ADD</div>
<div class="t" style="left:140.60px;top:934.00px;font-size:13.6px;font-weight:400;-webkit-text-stroke:0.45px #c9ccd2;color:#c9ccd2;transform:scaleX(0.9718);">20-08-2020  -  Jackson Parker</div>
<div class="t" style="left:1008.80px;top:207.00px;font-size:14.4px;font-weight:400;-webkit-text-stroke:0.45px #4a4e57;color:#4a4e57;transform:scaleX(0.8988);">PROJECT PERIOD</div>
<div class="t" style="left:1352.07px;top:207.00px;font-size:14.4px;font-weight:400;-webkit-text-stroke:0.45px #127cfa;color:#127cfa;transform:scaleX(0.9316);">EDIT</div>
<div class="t" style="left:1010.11px;top:277.00px;font-size:15.8px;font-weight:400;color:#42454c;transform:scaleX(0.8917);">MAY</div>
<div class="t" style="left:1084.00px;top:277.00px;font-size:15.8px;font-weight:400;color:#42454c;transform:scaleX(1.0182);">2020</div>
<div class="t" style="left:1012.96px;top:318.00px;font-size:12.6px;font-weight:400;-webkit-text-stroke:0.45px #a9b0bc;color:#a9b0bc;transform:scaleX(0.9406);">Mon</div>
<div class="t" style="left:1072.00px;top:318.00px;font-size:12.6px;font-weight:400;-webkit-text-stroke:0.45px #a9b0bc;color:#a9b0bc;transform:scaleX(0.8950);">Tue</div>
<div class="t" style="left:1125.50px;top:318.00px;font-size:12.6px;font-weight:400;-webkit-text-stroke:0.45px #a9b0bc;color:#a9b0bc;transform:scaleX(0.9001);">Wen</div>
<div class="t" style="left:1182.80px;top:318.00px;font-size:12.6px;font-weight:400;-webkit-text-stroke:0.45px #a9b0bc;color:#a9b0bc;transform:scaleX(0.9218);">Thu</div>
<div class="t" style="left:1237.99px;top:318.00px;font-size:12.6px;font-weight:400;-webkit-text-stroke:0.45px #a9b0bc;color:#a9b0bc;transform:scaleX(1.0088);">Fri</div>
<div class="t" style="left:1288.00px;top:318.00px;font-size:12.6px;font-weight:400;-webkit-text-stroke:0.45px #127cfa;color:#127cfa;transform:scaleX(0.9070);">Sat</div>
<div class="t" style="left:1341.00px;top:318.00px;font-size:12.6px;font-weight:400;-webkit-text-stroke:0.45px #127cfa;color:#127cfa;transform:scaleX(0.8927);">Sun</div>
<div class="t" style="left:1008.81px;top:650.00px;font-size:14.4px;font-weight:400;-webkit-text-stroke:0.45px #4a4e57;color:#4a4e57;transform:scaleX(0.8920);">PROJECT PROGRESS</div>
<div class="t" style="left:1053.20px;top:709.00px;font-size:14px;font-weight:700;color:#2c2f36;transform:scaleX(0.9832);">Crew &amp; transport</div>
<div class="t" style="left:1053.20px;top:727.00px;font-size:12.8px;font-weight:400;-webkit-text-stroke:0.2px #747881;color:#747881;transform:scaleX(0.9755);">The project has been confirmed but not all functions are</div>
<div class="t" style="left:1053.20px;top:741.00px;font-size:12.8px;font-weight:400;-webkit-text-stroke:0.2px #747881;color:#747881;transform:scaleX(0.9939);">fully planned</div>
<div class="t" style="left:1053.20px;top:801.00px;font-size:14px;font-weight:700;color:#2c2f36;transform:scaleX(0.9892);">Quotations</div>
<div class="t" style="left:1053.20px;top:818.00px;font-size:12.8px;font-weight:400;-webkit-text-stroke:0.2px #747881;color:#747881;transform:scaleX(0.9636);">The project has been confirmed</div>
<div class="t" style="left:1053.20px;top:883.00px;font-size:14px;font-weight:700;color:#2c2f36;transform:scaleX(0.9655);">Invoices</div>
<div class="t" style="left:1053.20px;top:900.00px;font-size:12.8px;font-weight:400;-webkit-text-stroke:0.2px #747881;color:#747881;transform:scaleX(0.9639);">There are still unpaid invoices</div>
<div class="t" style="left:1019.91px;top:367.00px;font-size:14px;font-weight:400;-webkit-text-stroke:0.45px #dfe0e3;color:#dfe0e3">31</div>
<div class="t" style="left:1079.00px;top:367.00px;font-size:14px;font-weight:400;-webkit-text-stroke:0.45px #fff;color:#fff">1</div>
<div class="t" style="left:1135.20px;top:367.00px;font-size:14px;font-weight:400;-webkit-text-stroke:0.45px #2c2f36;color:#2c2f36">2</div>
<div class="t" style="left:1191.50px;top:367.00px;font-size:14px;font-weight:400;-webkit-text-stroke:0.45px #2c2f36;color:#2c2f36">3</div>
<div class="t" style="left:1244.00px;top:367.00px;font-size:14px;font-weight:400;-webkit-text-stroke:0.45px #fff;color:#fff">4</div>
<div class="t" style="left:1294.80px;top:367.00px;font-size:14px;font-weight:400;-webkit-text-stroke:0.45px #1f86f8;color:#1f86f8">5</div>
<div class="t" style="left:1349.80px;top:367.00px;font-size:14px;font-weight:400;-webkit-text-stroke:0.45px #fff;color:#fff">6</div>
<div class="t" style="left:1023.80px;top:412.00px;font-size:14px;font-weight:400;-webkit-text-stroke:0.45px #2c2f36;color:#2c2f36">7</div>
<div class="t" style="left:1079.50px;top:412.00px;font-size:14px;font-weight:400;-webkit-text-stroke:0.45px #2c2f36;color:#2c2f36">8</div>
<div class="t" style="left:1135.20px;top:412.00px;font-size:14px;font-weight:400;-webkit-text-stroke:0.45px #2c2f36;color:#2c2f36">9</div>
<div class="t" style="left:1187.11px;top:412.00px;font-size:14px;font-weight:400;-webkit-text-stroke:0.45px #2c2f36;color:#2c2f36">10</div>
<div class="t" style="left:1240.13px;top:412.00px;font-size:14px;font-weight:400;-webkit-text-stroke:0.45px #2c2f36;color:#2c2f36">11</div>
<div class="t" style="left:1290.41px;top:412.00px;font-size:14px;font-weight:400;-webkit-text-stroke:0.45px #1f86f8;color:#1f86f8">12</div>
<div class="t" style="left:1345.41px;top:412.00px;font-size:14px;font-weight:400;-webkit-text-stroke:0.45px #1f86f8;color:#1f86f8">13</div>
<div class="t" style="left:1019.41px;top:456.00px;font-size:14px;font-weight:400;-webkit-text-stroke:0.45px #1f86f8;color:#1f86f8">14</div>
<div class="t" style="left:1075.11px;top:456.00px;font-size:14px;font-weight:400;-webkit-text-stroke:0.45px #2c2f36;color:#2c2f36">15</div>
<div class="t" style="left:1130.81px;top:456.00px;font-size:14px;font-weight:400;-webkit-text-stroke:0.45px #fff;color:#fff">16</div>
<div class="t" style="left:1187.11px;top:456.00px;font-size:14px;font-weight:400;-webkit-text-stroke:0.45px #2c2f36;color:#2c2f36">17</div>
<div class="t" style="left:1239.61px;top:456.00px;font-size:14px;font-weight:400;-webkit-text-stroke:0.45px #2c2f36;color:#2c2f36">18</div>
<div class="t" style="left:1290.41px;top:456.00px;font-size:14px;font-weight:400;-webkit-text-stroke:0.45px #1f86f8;color:#1f86f8">19</div>
<div class="t" style="left:1345.91px;top:456.00px;font-size:14px;font-weight:400;-webkit-text-stroke:0.45px #fff;color:#fff">20</div>
<div class="t" style="left:1019.91px;top:501.00px;font-size:14px;font-weight:400;-webkit-text-stroke:0.45px #2c2f36;color:#2c2f36">21</div>
<div class="t" style="left:1075.61px;top:501.00px;font-size:14px;font-weight:400;-webkit-text-stroke:0.45px #2c2f36;color:#2c2f36">22</div>
<div class="t" style="left:1131.31px;top:501.00px;font-size:14px;font-weight:400;-webkit-text-stroke:0.45px #2c2f36;color:#2c2f36">23</div>
<div class="t" style="left:1187.61px;top:501.00px;font-size:14px;font-weight:400;-webkit-text-stroke:0.45px #2c2f36;color:#2c2f36">24</div>
<div class="t" style="left:1240.11px;top:501.00px;font-size:14px;font-weight:400;-webkit-text-stroke:0.45px #2c2f36;color:#2c2f36">25</div>
<div class="t" style="left:1290.91px;top:501.00px;font-size:14px;font-weight:400;-webkit-text-stroke:0.45px #1f86f8;color:#1f86f8">26</div>
<div class="t" style="left:1345.91px;top:501.00px;font-size:14px;font-weight:400;-webkit-text-stroke:0.45px #1f86f8;color:#1f86f8">27</div>
<div class="t" style="left:1019.91px;top:546.00px;font-size:14px;font-weight:400;-webkit-text-stroke:0.45px #2c2f36;color:#2c2f36">28</div>
<div class="t" style="left:1075.61px;top:546.00px;font-size:14px;font-weight:400;-webkit-text-stroke:0.45px #2c2f36;color:#2c2f36">29</div>
<div class="t" style="left:1131.31px;top:546.00px;font-size:14px;font-weight:400;-webkit-text-stroke:0.45px #fff;color:#fff">30</div>
<div class="t" style="left:1187.61px;top:546.00px;font-size:14px;font-weight:400;-webkit-text-stroke:0.45px #2c2f36;color:#2c2f36">31</div>
<div class="t" style="left:1243.50px;top:546.00px;font-size:14px;font-weight:400;-webkit-text-stroke:0.45px #dcdee2;color:#dcdee2">1</div>
<div class="t" style="left:1294.80px;top:546.00px;font-size:14px;font-weight:400;-webkit-text-stroke:0.45px #94bdf6;color:#94bdf6">2</div>
<div class="t" style="left:1349.80px;top:546.00px;font-size:14px;font-weight:400;-webkit-text-stroke:0.45px #94bdf6;color:#94bdf6">3</div>
</div>
</body></html>
